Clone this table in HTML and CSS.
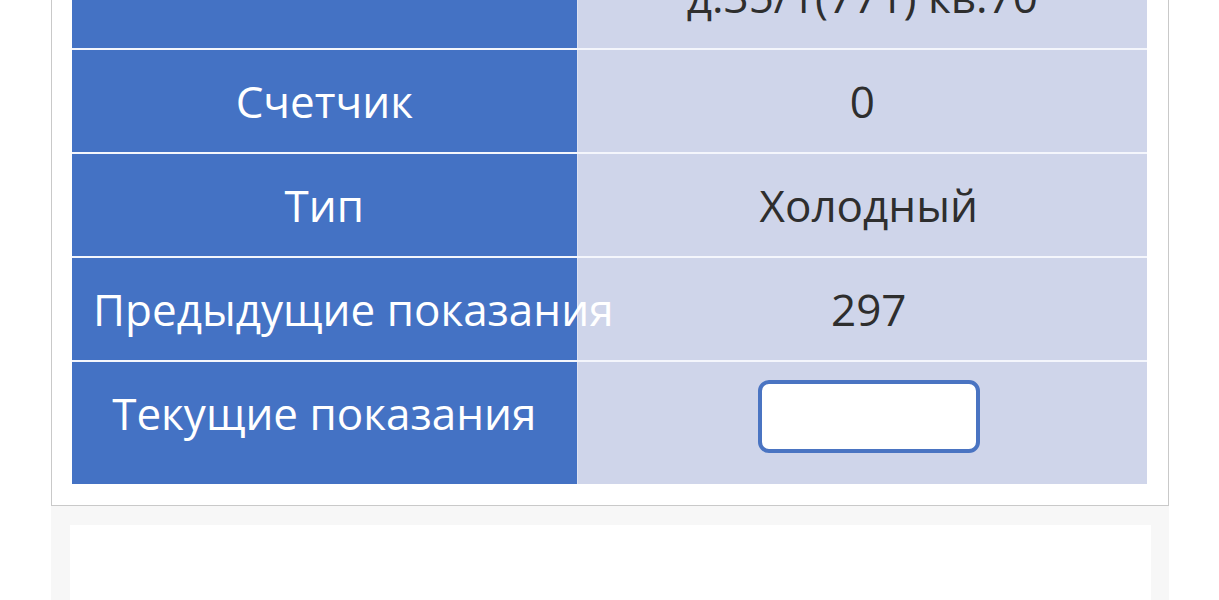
FILE: index.html
```html
<!DOCTYPE html>
<html lang="ru">
<head>
<meta charset="utf-8">
<title>Показания</title>
<link rel="stylesheet" href="styles.css">
</head>
<body>
<div class="page">
  <div class="card">
    <table class="meter">
      <colgroup><col class="col-label"><col class="col-value"></colgroup>
      <tr>
        <td class="label"></td>
        <td class="value">д.35/1(771) кв.70</td>
      </tr>
      <tr>
        <td class="label">Счетчик</td>
        <td class="value">0</td>
      </tr>
      <tr>
        <td class="label">Тип</td>
        <td class="value value-shift">Холодный</td>
      </tr>
      <tr>
        <td class="label">Предыдущие показания</td>
        <td class="value value-shift">297</td>
      </tr>
      <tr class="input-row">
        <td class="label">Текущие показания</td>
        <td class="value"><input class="reading" type="text"></td>
      </tr>
    </table>
  </div>
  <div class="next">
    <div class="next-card"></div>
  </div>
</div>
</body>
</html>
```

FILE: styles.css
```css
html, body {
  margin: 0;
  padding: 0;
  background: #ffffff;
}

body {
  font-family: "Open Sans", "Noto Sans", sans-serif;
  overflow: hidden;
}

.page {
  margin: -77px 0 0 51px;
  width: 1118px;
}

.card {
  border: 1px solid #c9c9c9;
  background: #ffffff;
  padding: 20px 20px 21px 20px;
}

.meter {
  width: 1075px;
  border-collapse: collapse;
  table-layout: fixed;
}

.col-label { width: 505px; }

.meter td {
  height: 102px;
  padding: 0;
  border-top: 2px solid #f4f6fc;
  text-align: center;
  vertical-align: middle;
  font-size: 44px;
  line-height: 60px;
  white-space: nowrap;
}

.meter tr:first-child td {
  border-top: none;
  height: 104px;
}

.meter td.label {
  background: #4472c4;
  color: #ffffff;
  padding: 0 21px;
}

.meter td.value {
  background: #cfd5ea;
  color: #2e2e2e;
  border-left: 1px solid #dde2f2;
}

.meter td.value-shift {
  padding-left: 13px;
}

.meter .input-row td {
  height: auto;
}

.meter .input-row td.label {
  padding: 0 21px 20px;
}

.meter .input-row td.value {
  padding: 18px 0 31px;
}

.reading {
  display: block;
  margin: 0 auto 0 180px;
  box-sizing: border-box;
  width: 222px;
  height: 73px;
  border: 4px solid #4a74c2;
  border-radius: 11px;
  background: #ffffff;
  outline: none;
}

.next {
  background: #f7f7f7;
  padding: 19px 18px 0 19px;
  height: 200px;
}

.next-card {
  background: #ffffff;
  height: 200px;
}
```
